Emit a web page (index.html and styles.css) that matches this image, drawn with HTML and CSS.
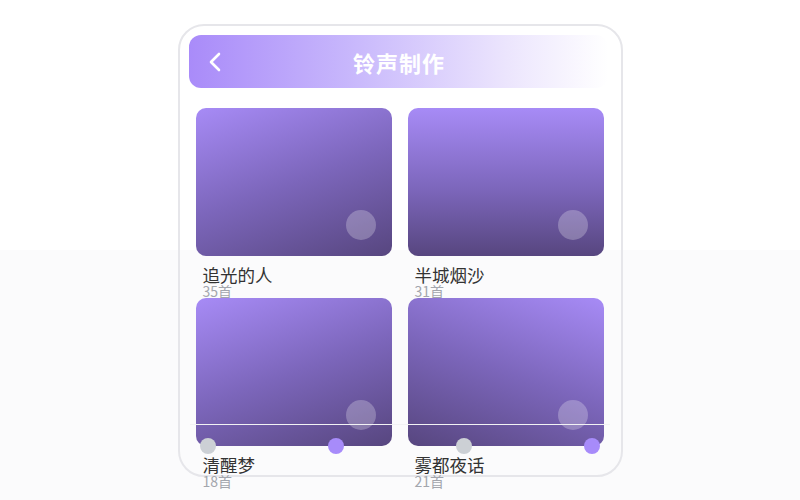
FILE: index.html
```html
<!DOCTYPE html>
<html lang="zh-CN">
<head>
  <meta charset="UTF-8">
  <meta name="viewport" content="width=device-width, initial-scale=1.0">
  <title>铃声制作</title>
  <link rel="stylesheet" href="styles.css">
</head>
<body>
  <!-- 手机外框 -->
  <div class="phone">
    <!-- 顶部标题栏 -->
    <div class="header">
      <svg class="back" width="14" height="20" viewBox="0 0 14 20">
        <path d="M11 2 L3 10 L11 18" fill="none" stroke="#fff" stroke-width="2.6" stroke-linecap="round" stroke-linejoin="round"/>
      </svg>
      <h1>铃声制作</h1>
    </div>

    <!-- 专辑列表 -->
    <div class="grid">
      <div class="item">
        <div class="cover cover-a"><span class="play"></span></div>
        <div class="name">追光的人</div>
        <div class="count">35首</div>
      </div>
      <div class="item">
        <div class="cover cover-b"><span class="play"></span></div>
        <div class="name">半城烟沙</div>
        <div class="count">31首</div>
      </div>
      <div class="item">
        <div class="cover cover-a"><span class="play"></span></div>
        <div class="name">清醒梦</div>
        <div class="count">18首</div>
      </div>
      <div class="item">
        <div class="cover cover-c"><span class="play"></span></div>
        <div class="name">雾都夜话</div>
        <div class="count">21首</div>
      </div>
    </div>

    <!-- 进度条浮层 -->
    <div class="track"></div>
    <span class="dot grey d1"></span>
    <span class="dot purple d2"></span>
    <span class="dot grey d3"></span>
    <span class="dot purple d4"></span>
  </div>
</body>
</html>
```

FILE: styles.css
```css
/* 基本样式 */
body {
  margin: 0;
  height: 500px;
  font-family: "Noto Sans CJK SC", "Noto Sans", sans-serif;
  background: linear-gradient(#ffffff 50%, #fbfbfc 50%);
  overflow: hidden;
}

/* 外框 */
.phone {
  position: relative;
  width: 423px;
  height: 431px;
  margin: 24px auto 0;
  padding: 9px;
  border: 2px solid #e6e6ea;
  border-radius: 26px;
}

/* 标题栏 */
.header {
  position: relative;
  width: 419px;
  height: 53px;
  border-radius: 12px;
  background: linear-gradient(90deg, #a98bf9 0%, #c9b9fc 40%, #ebe4fd 75%, #ffffff 100%);
  display: flex;
  align-items: center;
  justify-content: center;
}

.back {
  position: absolute;
  left: 19px;
  top: 17px;
}

.header h1 {
  margin: 0 0 0 2px;
  color: #fff;
  font-size: 22px;
  font-weight: 700;
  letter-spacing: 1px;
}

/* 网格 */
.grid {
  display: grid;
  grid-template-columns: 196px 196px;
  column-gap: 16px;
  margin: 20px 0 0 7px;
}

.cover {
  position: relative;
  height: 148px;
  border-radius: 10px;
}

.cover-a {
  background: linear-gradient(160deg, #a78bf6 0%, #7c66bb 50%, #57467f 100%);
}

.cover-b {
  background: linear-gradient(180deg, #a78bf6 0%, #7c66bb 55%, #57467f 100%);
}

.cover-c {
  background: linear-gradient(200deg, #a78bf6 0%, #7c66bb 50%, #57467f 100%);
}

.play {
  position: absolute;
  right: 16px;
  bottom: 16px;
  width: 30px;
  height: 30px;
  border-radius: 50%;
  background: rgba(255, 255, 255, 0.25);
}

.name {
  margin: 8px 0 0 7px;
  font-size: 17.5px;
  line-height: 21px;
  color: #333;
}

.count {
  margin-left: 7px;
  font-size: 14px;
  line-height: 13px;
  color: #a3a6ad;
}

/* 进度条 */
.track {
  position: absolute;
  left: 10px;
  top: 398px;
  width: 420px;
  height: 1px;
  background: #f2f2f4;
}

.dot {
  position: absolute;
  top: 412px;
  width: 16px;
  height: 16px;
  border-radius: 50%;
}

.grey { background: #ccd0d5; }
.purple { background: #a78bfa; }

.d1 { left: 20px; }
.d2 { left: 148px; }
.d3 { left: 276px; }
.d4 { left: 404px; }
```
